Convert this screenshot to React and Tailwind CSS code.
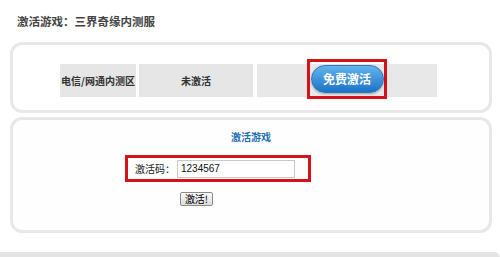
export default function App() {
  const font = { fontFamily: '"Noto Sans CJK SC", "Liberation Sans", sans-serif' }
  return (
    <div className="w-[500px] h-[257px] bg-white overflow-hidden text-[10px] text-[#333]" style={font}>
      {/* Title */}
      <div className="pt-[13px] pl-[17px] h-[29px] leading-[16px] text-[11.5px] font-bold text-[#444]">激活游戏：三界奇缘内测服</div>

      {/* Server status card */}
      <div className="mt-[13px] ml-[10px] w-[482px] h-[71px] border-[3px] border-[#e8e8e8] rounded-[12px] pt-[19px] pl-[47px]">
        <div className="flex gap-[3px] h-[33px]">
          <div className="w-[76px] bg-[#e6e6e6] flex items-center justify-center font-bold whitespace-nowrap">电信/网通内测区</div>
          <div className="w-[114px] bg-[#e6e6e6] flex items-center justify-center font-bold">未激活</div>
          <div className="ml-[1px] w-[180px] bg-[#e8e8e8] flex items-center justify-center">
            <div className="w-[80px] h-[40px] border-[3px] border-[#d3121c] flex items-center justify-center -mt-[3px]">
              <button className="w-[73px] h-[28px] rounded-full bg-gradient-to-b from-[#62b4ec] to-[#1b72c6] border border-[#2f78bd] text-white font-bold text-[12px] leading-none shadow-[0_1px_2px_rgba(0,0,0,0.3)]">
                免费激活
              </button>
            </div>
          </div>
        </div>
      </div>

      {/* Activation code card */}
      <div className="mt-[4px] ml-[10px] w-[482px] h-[116px] border-[3px] border-[#e8e8e8] rounded-[12px] pt-[9px] bg-[#fefefe]">
        <div className="text-center leading-[16px] font-bold text-[#1f6fb2]">激活游戏</div>
        <div className="mt-[10px] ml-[112px] w-[186px] h-[27px] border-[3px] border-[#d3121c] flex items-center pl-[7px]">
          <span className="w-[42px] whitespace-nowrap text-[#222]">激活码：</span>
          <div className="w-[118px] h-[18px] border border-[#c8c8c8] bg-white pl-[3px] flex items-center text-[10px] text-[#111]" style={{ fontFamily: '"Liberation Sans", sans-serif' }}>
            1234567
          </div>
        </div>
        <button className="mt-[10px] ml-[167px] w-[33px] h-[14px] border border-[#8a8a8a] rounded-[2px] bg-gradient-to-b from-[#fafafa] to-[#dcdcdc] text-[10px] leading-none text-black flex items-center justify-center">
          激活!
        </button>
      </div>

      {/* bottom edge */}
      <div className="mt-[19px] h-[6px] bg-[#e4e4e4] rounded-tr-[6px]"></div>
    </div>
  )
}
